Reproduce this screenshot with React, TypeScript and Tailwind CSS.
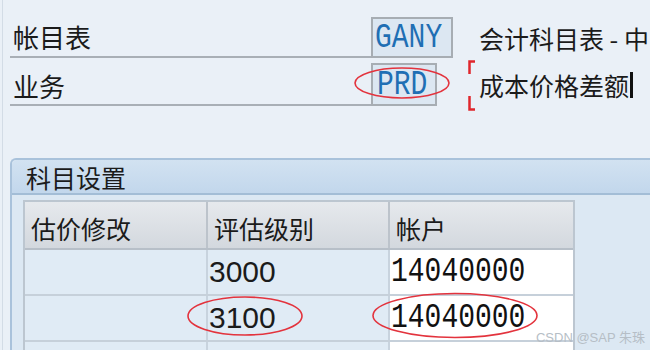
import React from "react";

const cjk = { fontFamily: '"Noto Sans CJK SC", "Noto Sans", sans-serif' };
const mono = { fontFamily: '"Liberation Mono", "Courier New", monospace' };
const sans = { fontFamily: '"Liberation Sans", Arial, sans-serif' };

function MonoText({ children, className = "" }: { children: React.ReactNode; className?: string }) {
  return (
    <span className={"inline-block origin-center scale-y-[1.25] leading-none " + className} style={mono}>
      {children}
    </span>
  );
}

export default function App() {
  return (
    <div className="relative w-[650px] h-[350px] overflow-hidden bg-[#eaf0f7] flex flex-row">
      <div className="w-[2px] shrink-0" />
      <div className="w-[1px] shrink-0 bg-[#d3dce6]" />
      <div className="flex-1 flex flex-col pt-[17px]">
        {/* Row 1 */}
        <div className="shrink-0 flex flex-row h-[41px]">
          <div
            className="ml-[7px] w-[361px] border-b-2 border-[#a9afb6] flex items-center pl-[3px] text-[26px] leading-[26px] text-[#1b1b1b]"
            style={cjk}
          >
            帐目表
          </div>
          <div className="w-[82px] h-full border-2 border-[#a7adb3] bg-[#dce7f2] flex items-center pl-[2px]">
            <MonoText className="text-[28px] text-[#1f6fb4]">GANY</MonoText>
          </div>
          <div
            className="ml-[26px] flex items-center whitespace-nowrap text-[25px] leading-[26px] text-[#1b1b1b]"
            style={cjk}
          >
            会计科目表 - 中
          </div>
        </div>
        {/* Row 2 */}
        <div className="shrink-0 flex flex-row h-[43px] mt-[5px]">
          <div
            className="ml-[7px] w-[361px] border-b-2 border-[#a9afb6] flex items-center pl-[3px] pt-[4px] text-[26px] leading-[26px] text-[#1b1b1b]"
            style={cjk}
          >
            业务
          </div>
          <div className="w-[66px] h-full border-2 border-[#a7adb3] bg-[#dce7f2] flex items-center pl-[4px]">
            <MonoText className="text-[28px] text-[#1f6fb4]">PRD</MonoText>
          </div>
          <div className="relative ml-[31px] flex items-center pl-[11px]">
            <svg className="absolute left-0 top-[-3px]" width="8" height="51" viewBox="0 0 8 51">
              <path d="M1.5 14 V1.5 H7" fill="none" stroke="#e0262c" strokeWidth="2.5" />
              <path d="M1.5 36 V49.5 H7" fill="none" stroke="#e0262c" strokeWidth="2.5" />
            </svg>
            <span className="text-[25px] leading-[26px] text-[#1b1b1b] whitespace-nowrap" style={cjk}>
              成本价格差额
            </span>
            <span className="ml-[1px] w-[3px] h-[26px] bg-[#111]" />
          </div>
        </div>

        {/* Group box */}
        <div className="shrink-0 h-[200px] mt-[52px] ml-[7px] border-l-2 border-t-2 border-[#a9c2db] rounded-tl-[6px] bg-[#dce8f3] flex flex-col">
          <div className="shrink-0 h-[35px] border-b-2 border-[#a3bdd6] bg-gradient-to-b from-[#d2e2f1] to-[#c2d7ec] flex items-center pl-[14px] rounded-tl-[5px]">
            <span className="text-[25px] leading-[26px] text-[#1b1b1b]" style={cjk}>
              科目设置
            </span>
          </div>
          <div className="shrink-0 ml-[11px] mt-[5px] w-[552px] border-l-2 border-t-2 border-r-2 border-[#bcc6d0]">
            {/* Header */}
            <div className="grid grid-cols-[183px_182px_183px] h-[48px] bg-gradient-to-b from-[#e6e9ed] to-[#d3d8de] border-b-2 border-[#b7bfc8]">
              {["估价修改", "评估级别", "帐户"].map((h, i) => (
                <div
                  key={h}
                  className={
                    "flex items-center pl-[6px] pt-[6px] text-[25px] leading-[26px] text-[#1b1b1b] " +
                    (i < 2 ? "border-r-2 border-[#bcc3cb]" : "")
                  }
                  style={cjk}
                >
                  {h}
                </div>
              ))}
            </div>
            {/* Rows */}
            {[
              ["", "3000", "14040000"],
              ["", "3100", "14040000"],
              ["", "", ""],
            ].map((r, idx) => (
              <div key={idx} className="grid grid-cols-[183px_182px_183px] h-[46px] border-b-2 border-[#c6d0da]">
                <div className="bg-[#e0ebf5] border-r-2 border-[#c8d3de]" />
                <div className="bg-[#e0ebf5] border-r-2 border-[#c8d3de] flex items-center pl-[1px]">
                  <span className="text-[30px] leading-[30px] text-[#1b1b1b]" style={sans}>
                    {r[1]}
                  </span>
                </div>
                <div className="bg-white flex items-center pl-[1px]">
                  <MonoText className="text-[28px] text-[#111]">{r[2]}</MonoText>
                </div>
              </div>
            ))}
          </div>
        </div>
      </div>

      {/* Annotation ellipses */}
      <svg className="absolute inset-0 pointer-events-none" width="650" height="350" viewBox="0 0 650 350">
        <ellipse cx="402" cy="83" rx="47" ry="15" fill="none" stroke="#e3333d" strokeWidth="1.6" />
        <ellipse cx="245" cy="316" rx="57" ry="19" fill="none" stroke="#e3333d" strokeWidth="1.6" />
        <ellipse cx="455" cy="315.5" rx="82" ry="22" fill="none" stroke="#e3333d" strokeWidth="1.6" />
      </svg>

      {/* Watermark */}
      <div
        className="absolute right-[5px] top-[330px] text-[13px] leading-[15px] text-[#b6bec6] whitespace-nowrap"
        style={{ fontFamily: '"Liberation Sans", "Noto Sans CJK SC", sans-serif' }}
      >
        CSDN @SAP 朱珠
      </div>
    </div>
  );
}
